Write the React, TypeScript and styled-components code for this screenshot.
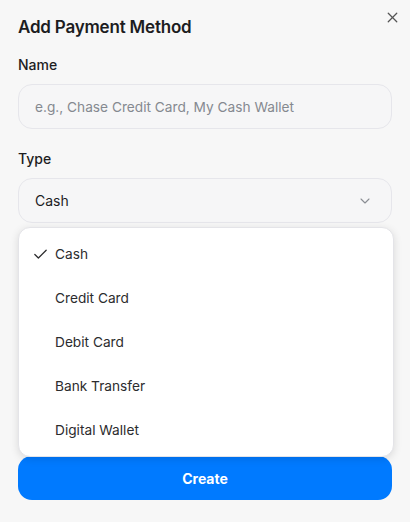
import React from "react";
import styled, { createGlobalStyle } from "styled-components";
import { X, ChevronDown, Check } from "lucide-react";

const Global = createGlobalStyle`
  html, body { margin: 0; padding: 0; background: #f7f7f7; }
  body { font-family: Inter, "Noto Sans", "Liberation Sans", sans-serif; -webkit-font-smoothing: antialiased; }
  * { box-sizing: border-box; }
`;

const Dialog = styled.div`
  position: relative;
  width: 410px;
  height: 522px;
  background: #f7f7f7;
  padding: 15px 18px 0 18px;
  display: flex;
  flex-direction: column;
`;

const Title = styled.h2`
  margin: 0;
  font-size: 17px;
  line-height: 24px;
  font-weight: 600;
  color: #1d1d1f;
  letter-spacing: -0.2px;
`;

const CloseButton = styled.button`
  position: absolute;
  top: 8px;
  right: 9px;
  width: 18px;
  height: 18px;
  padding: 0;
  border: none;
  background: transparent;
  color: #555;
  display: flex;
  align-items: center;
  justify-content: center;
`;

const Field = styled.div<{ $mt: number }>`
  display: flex;
  flex-direction: column;
  gap: 10px;
  margin-top: ${(p) => p.$mt}px;
`;

const Label = styled.label`
  font-size: 14px;
  line-height: 18px;
  font-weight: 500;
  color: #1d1d1f;
`;

const Input = styled.div<{ $h?: number }>`
  height: ${(p) => p.$h ?? 45}px;
  border: 1px solid #e6e6eb;
  border-radius: 14px;
  background: #f6f6f7;
  display: flex;
  align-items: center;
  padding: 0 16px;
  font-size: 13.7px;
  color: #858990;
`;

const Trigger = styled(Input)`
  justify-content: space-between;
  font-size: 14px;
  color: #1d1d1f;
  padding-right: 18px;
`;

const Spacer = styled.div`
  margin-top: 24px;
  height: 24px;
`;

const CreateButton = styled.button`
  margin-top: 42px;
  height: 44px;
  border: none;
  border-radius: 14px;
  background: #007aff;
  color: #fff;
  font-family: inherit;
  font-size: 14px;
  font-weight: 700;
`;

const Menu = styled.div`
  position: absolute;
  top: 227px;
  left: 18px;
  width: 376px;
  height: 230px;
  background: #fff;
  border: 1px solid #e4e4e8;
  border-radius: 12px;
  box-shadow: 0 2px 8px rgba(0, 0, 0, 0.12);
  padding: 4px 0;
  display: flex;
  flex-direction: column;
  z-index: 2;
`;

const Item = styled.div`
  height: 44px;
  display: flex;
  align-items: center;
  padding-left: 13px;
  font-size: 13.7px;
  color: #2c2c2e;
`;

const CheckSlot = styled.span`
  width: 23px;
  display: flex;
  align-items: center;
  color: #2c2c2e;
`;

const options = ["Cash", "Credit Card", "Debit Card", "Bank Transfer", "Digital Wallet"];

export default function App() {
  const selected = "Cash";
  return (
    <>
      <Global />
      <Dialog>
        <Title>Add Payment Method</Title>
        <CloseButton aria-label="Close">
          <X size={17} strokeWidth={1.8} />
        </CloseButton>
        <Field $mt={17}>
          <Label>Name</Label>
          <Input>e.g., Chase Credit Card, My Cash Wallet</Input>
        </Field>
        <Field $mt={21}>
          <Label>Type</Label>
          <Trigger>
            <span>Cash</span>
            <ChevronDown size={16} color="#8a8d93" strokeWidth={1.6} />
          </Trigger>
        </Field>
        <Spacer />
        <Field $mt={45}>
          <Label>Notes</Label>
          <Input $h={70} />
        </Field>
        <CreateButton>Create</CreateButton>
        <Menu>
          {options.map((o) => (
            <Item key={o}>
              <CheckSlot>{o === selected && <Check size={17} strokeWidth={1.8} />}</CheckSlot>
              {o}
            </Item>
          ))}
        </Menu>
      </Dialog>
    </>
  );
}
